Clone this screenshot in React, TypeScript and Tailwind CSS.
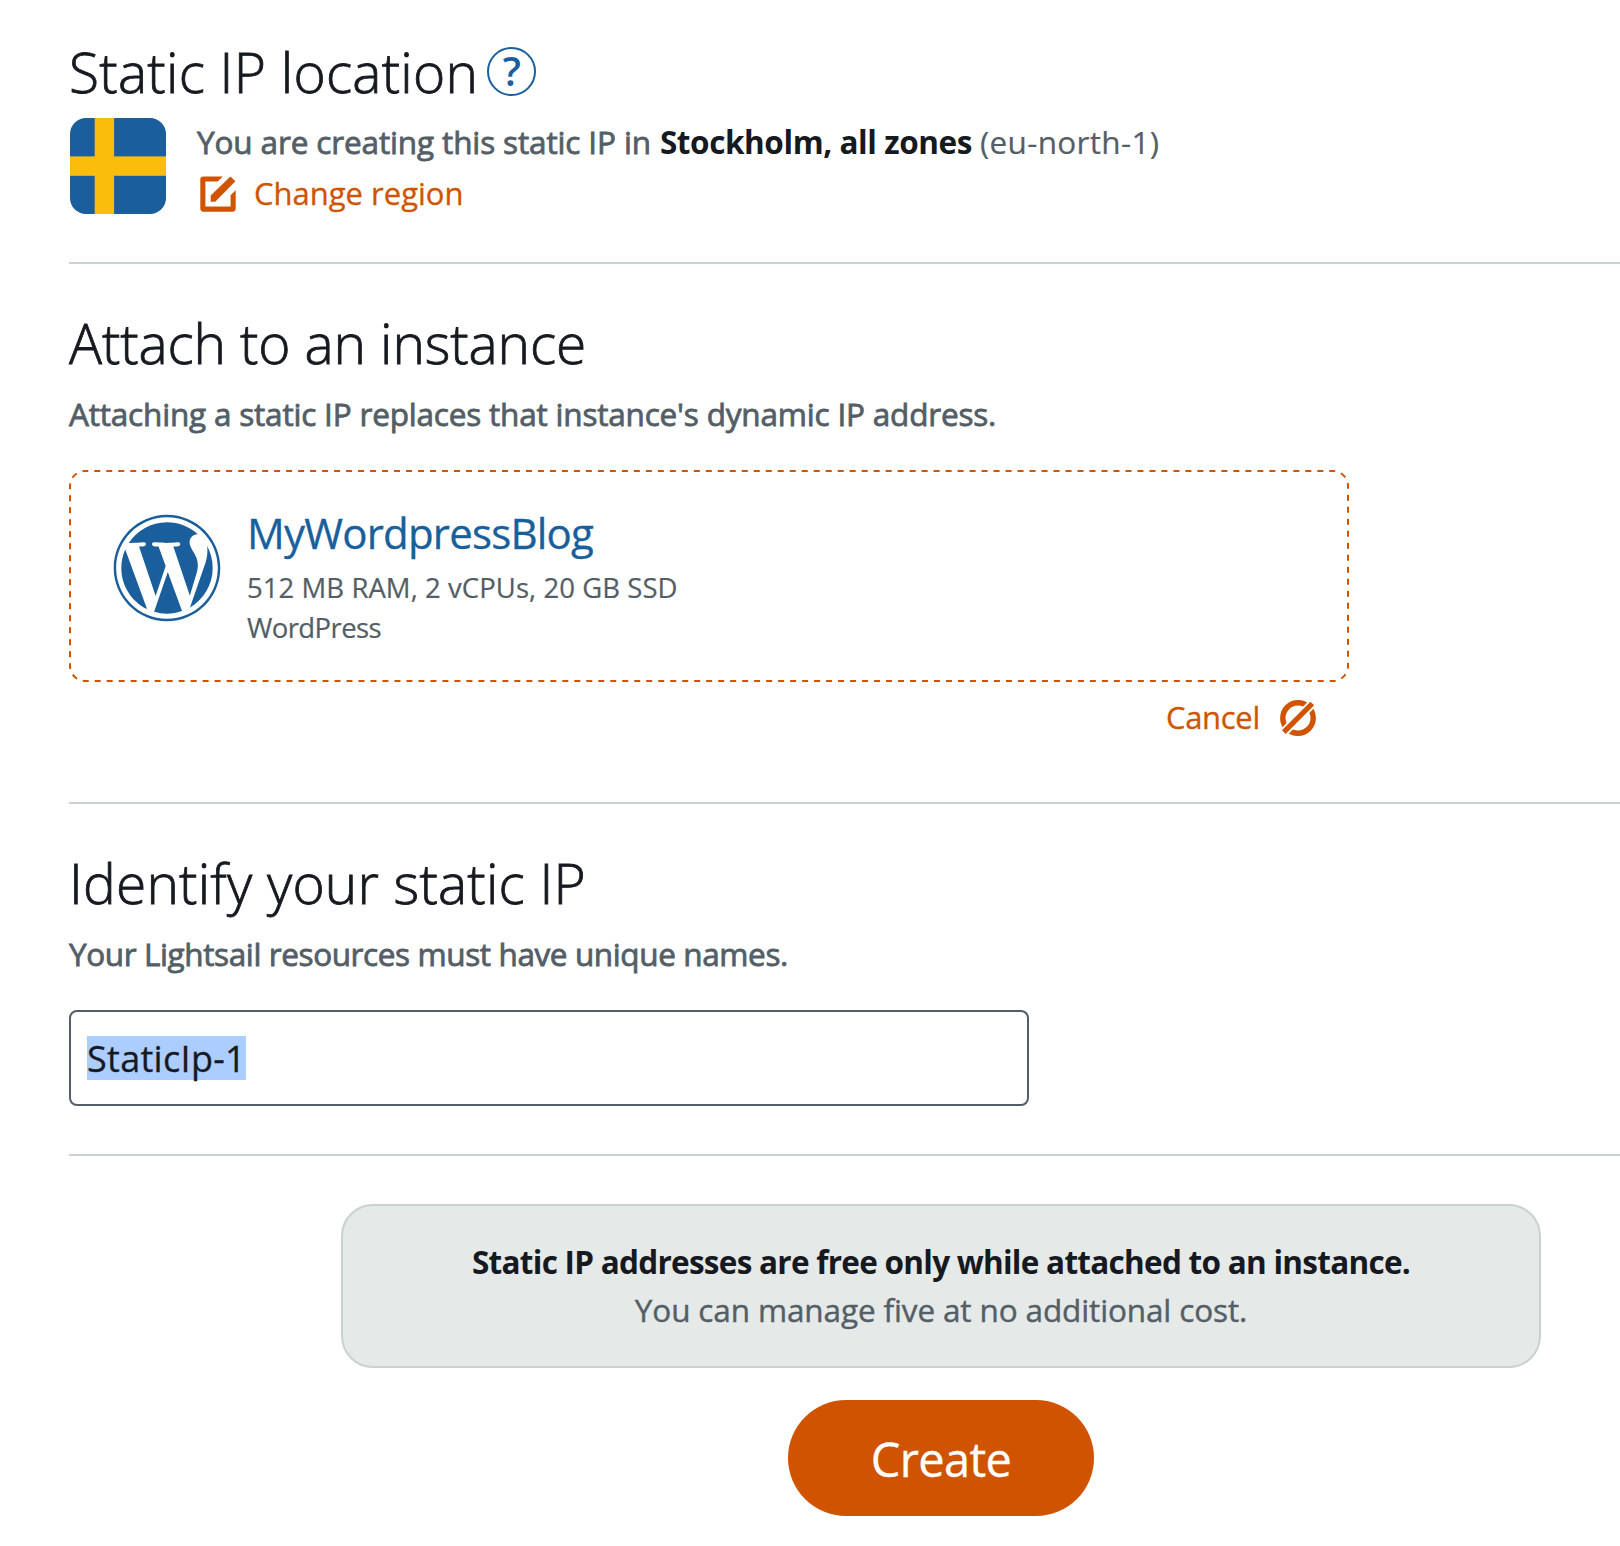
import type { ReactNode } from "react";
import { FaWordpress } from "react-icons/fa";

function Divider({ className }: { className: string }) {
  return <hr className={`h-0.5 border-0 bg-[#cad1d0] ${className}`} />;
}

function Heading({ children, className }: { children: ReactNode; className: string }) {
  return (
    <h2 className={`text-[55px] leading-[72px] font-light text-[#16191f] [-webkit-text-stroke:0.8px_#16191f] ${className}`}>
      {children}
    </h2>
  );
}

function SwedenFlag() {
  return (
    <svg className="block size-24 shrink-0 rounded-2xl" viewBox="0 0 96 96" aria-hidden="true">
      <rect width="96" height="96" fill="#1a5f9c" />
      <rect x="24.7" width="19.4" height="96" fill="#fabd0b" />
      <rect y="38.4" width="96" height="19.4" fill="#fabd0b" />
    </svg>
  );
}

function EditIcon() {
  return (
    <svg className="mt-px size-9" viewBox="0 0 36 36" fill="currentColor" aria-hidden="true">
      <path d="M22.8 0.4H3.4A3.1 3.1 0 0 0 0.3 3.5V32.6A3.1 3.1 0 0 0 3.4 35.7H32.6A3.1 3.1 0 0 0 35.7 32.6V14.2L30.6 19.3V30.6H5.4V5.5H17.7Z" />
      <path d="M10.7 25.7V19.4L30.4 0.5L35.4 5.3L15.2 25.7Z" />
    </svg>
  );
}

function CancelIcon() {
  return (
    <svg className="mt-0.5 size-9" viewBox="0 0 36 36" fill="none" aria-hidden="true">
      <circle cx="18" cy="18" r="15.2" stroke="currentColor" strokeWidth="5.4" />
      <path d="M0 36L36 0" stroke="white" strokeWidth="9" />
      <path d="M3.8 32.2L32.3 3.5" stroke="currentColor" strokeWidth="5.2" />
    </svg>
  );
}

/* Six-on, six-off dashes that also run evenly round the corners. */
function DashedOutline() {
  return (
    <svg className="pointer-events-none absolute inset-0 size-full text-[#d05400]" viewBox="0 0 1280 212" fill="none" aria-hidden="true">
      <rect x="1" y="1" width="1278" height="210" rx="15" stroke="currentColor" strokeWidth="2" pathLength="2952" strokeDasharray="6 6" strokeDashoffset="2.7" />
    </svg>
  );
}

export default function App() {
  return (
    <div className="h-[1546px] w-full overflow-hidden bg-white font-['Open_Sans',sans-serif] text-[#545e66]">
      <main className="ml-[69px] flex w-[1744px] flex-col pt-9">
        <section>
          <div className="flex items-center">
            <Heading className="tracking-[0.26px]">Static IP location</Heading>
            <button
              aria-label="Help"
              className="-mt-px ml-[9px] flex size-[49px] items-center justify-center rounded-full border-2 border-[#1a5f9c] pb-0.5 text-[40px] leading-none font-semibold text-[#1a5f9c]"
            >
              ?
            </button>
          </div>
          <div className="mt-2.5 ml-px flex">
            <SwedenFlag />
            <div className="ml-[31px]">
              <p className="flex text-[31.5px] leading-[48px] whitespace-nowrap">
                <span className="tracking-[-0.13px] [-webkit-text-stroke:0.8px]">You are creating this static IP in</span>
                <strong className="ml-[9px] font-bold tracking-[-0.42px] text-[#16191f]">Stockholm, all zones</strong>
                <span className="ml-2 tracking-[0.32px] [-webkit-text-stroke:0.2px]">(eu-north-1)</span>
              </p>
              <a className="flex h-[54px] items-center gap-[18px] pl-[3px] text-[31px] leading-[54px] text-[#d05400] [-webkit-text-stroke:0.3px]">
                <EditIcon />
                Change region
              </a>
            </div>
          </div>
        </section>

        <Divider className="mt-[42px]" />

        <section>
          <Heading className="mt-[43px] tracking-[-0.12px]">Attach to an instance</Heading>
          <p className="mt-[11px] text-[31.5px] leading-[48px] tracking-[-0.19px] [-webkit-text-stroke:0.8px]">
            Attaching a static IP replaces that instance&apos;s dynamic IP address.
          </p>
          <div className="relative mt-8 flex h-[212px] w-[1280px] pt-[43px] pl-[43px]">
            <DashedOutline />
            <FaWordpress className="size-[110px] shrink-0 text-[#1a5f9c]" />
            <div className="-mt-2 ml-[23px]">
              <h3 className="ml-0.5 text-[42px] leading-[56px] tracking-[-0.8px] text-[#1a5f9c] [-webkit-text-stroke:0.3px]">MyWordpressBlog</h3>
              <p className="mt-[7px] ml-0.5 text-[27.5px] leading-10 tracking-[0.06px] [-webkit-text-stroke:0.2px]">512 MB RAM, 2 vCPUs, 20 GB SSD</p>
              <p className="ml-0.5 text-[27.5px] leading-10 tracking-[-0.6px] [-webkit-text-stroke:0.2px]">WordPress</p>
            </div>
          </div>
          <div className="mt-[15px] flex h-10 w-[1280px] justify-end pr-[33px]">
            <a className="flex items-center gap-5 text-[31px] leading-10 tracking-[-0.3px] text-[#d05400] [-webkit-text-stroke:0.3px]">
              Cancel
              <CancelIcon />
            </a>
          </div>
        </section>

        <Divider className="mt-[65px]" />

        <section>
          <Heading className="mt-[43px] tracking-[0.2px]">Identify your static IP</Heading>
          <p className="mt-[11px] text-[31.5px] leading-[48px] tracking-[-0.39px] [-webkit-text-stroke:0.8px]">
            Your Lightsail resources must have unique names.
          </p>
          <div className="mt-8 flex h-24 w-[960px] items-center rounded-lg border-2 border-[#545e66] px-4 text-[#16191f]">
            <span className="h-11 w-[159px] bg-[#abcdff] text-[36px] leading-[46px] tracking-[0.3px] whitespace-nowrap [-webkit-text-stroke:0.3px]">
              StaticIp-1
            </span>
          </div>
        </section>

        <Divider className="mt-12" />

        <section className="flex flex-col items-center">
          <div className="mt-12 h-[164px] w-[1200px] rounded-[32px] border-2 border-[#cad1d0] bg-[#e5e9e8] pt-8 text-center text-[31.5px] leading-[48px]">
            <p className="font-bold tracking-[-0.73px] text-[#16191f]">
              Static IP addresses are free only while attached to an instance.
            </p>
            <p className="tracking-[-0.13px] [-webkit-text-stroke:0.4px]">You can manage five at no additional cost.</p>
          </div>
          <button className="mt-8 h-[116px] w-[306px] rounded-full bg-[#d05400] text-[47px] leading-[118px] tracking-[-0.65px] text-white [-webkit-text-stroke:0.3px]">
            Create
          </button>
        </section>
      </main>
    </div>
  );
}
